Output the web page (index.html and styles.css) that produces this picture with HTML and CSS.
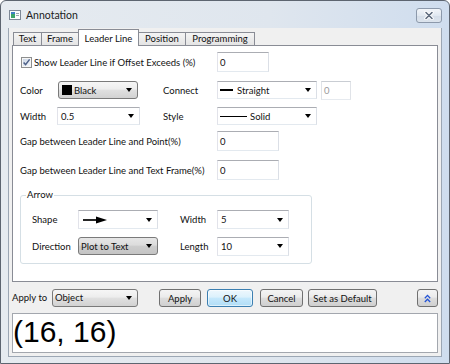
FILE: index.html
```html
<!DOCTYPE html>
<html>
<head>
<meta charset="utf-8">
<title>Annotation</title>
<link rel="stylesheet" href="styles.css">
</head>
<body>
<div class="window">
  <div class="titlebar">
    <svg class="app-icon" width="12" height="10" viewBox="0 0 12 10">
      <rect x="0.5" y="0.5" width="11" height="9" fill="#fbfcfd" stroke="#7d8896"/>
      <rect x="2" y="2" width="4" height="6" fill="#3aa46a"/>
      <rect x="2" y="2" width="4" height="2" fill="#3f7fc4"/>
      <rect x="7" y="3" width="3" height="1" fill="#9aa4b0"/>
      <rect x="7" y="5" width="3" height="1" fill="#9aa4b0"/>
    </svg>
    <span class="title">Annotation</span>
    <div class="close-btn">
      <svg width="10" height="9" viewBox="0 0 10 9">
        <path d="M2 1.5L8 7.5M8 1.5L2 7.5" stroke="#ffffff" stroke-width="3.4" stroke-linecap="round"/>
        <path d="M2 1.5L8 7.5M8 1.5L2 7.5" stroke="#5f6c7e" stroke-width="1.6" stroke-linecap="round"/>
      </svg>
    </div>
  </div>

  <div class="client">
    <div class="tabs">
      <div class="tab t-text">Text</div>
      <div class="tab t-frame">Frame</div>
      <div class="tab t-leader active">Leader Line</div>
      <div class="tab t-position">Position</div>
      <div class="tab t-prog">Programming</div>
    </div>

    <div class="panel">
      <div class="row r1">
        <div class="check">
          <svg class="checkbox" width="11" height="11" viewBox="0 0 11 11">
            <defs>
              <linearGradient id="cbg" x1="0" y1="0" x2="1" y2="1">
                <stop offset="0" stop-color="#cbd6e6"/>
                <stop offset="1" stop-color="#f4f7fb"/>
              </linearGradient>
            </defs>
            <rect x="0.5" y="0.5" width="10" height="10" fill="#f6f6f6" stroke="#8e8f8f"/>
            <rect x="2" y="2" width="7" height="7" fill="url(#cbg)"/>
            <path d="M2.6 5.4L4.6 7.6L8.6 2.4" fill="none" stroke="#4e6088" stroke-width="1.5"/>
          </svg>
          <span>Show Leader Line if Offset Exceeds (%)</span>
        </div>
        <div class="textbox w52">0</div>
      </div>

      <div class="row r2">
        <span class="lbl w38">Color</span>
        <div class="combo btnlike c-color">
          <span class="val"><span class="swatch"></span>Black</span>
        </div>
        <span class="lbl lbl-b">Connect</span>
        <div class="combo c-wide">
          <span class="val"><span class="dash"></span>Straight</span>
        </div>
        <div class="textbox disabled small">0</div>
      </div>

      <div class="row r3">
        <span class="lbl w37">Width</span>
        <div class="combo c-width"><span class="val">0.5</span></div>
        <span class="lbl lbl-b2">Style</span>
        <div class="combo c-wide"><span class="val"><span class="solid"></span>Solid</span></div>
      </div>

      <div class="row r4">
        <span class="lbl w197">Gap between Leader Line and Point(%)</span>
        <div class="textbox w62">0</div>
      </div>

      <div class="row r5">
        <span class="lbl w197">Gap between Leader Line and Text Frame(%)</span>
        <div class="textbox w62">0</div>
      </div>

      <fieldset class="group">
        <legend>Arrow</legend>
        <div class="row g1">
          <span class="lbl w46">Shape</span>
          <div class="combo c-shape">
            <span class="val">
              <svg width="24" height="8" viewBox="0 0 24 8">
                <path d="M0 4H14" stroke="#000" stroke-width="1.7"/>
                <path d="M13 0.5L24 4L13 7.5Z" fill="#000"/>
              </svg>
            </span>
          </div>
          <span class="lbl lbl-c">Width</span>
          <div class="combo c-small"><span class="val">5</span></div>
        </div>
        <div class="row g2">
          <span class="lbl w46">Direction</span>
          <div class="combo btnlike dark c-shape"><span class="val">Plot to Text</span></div>
          <span class="lbl lbl-c">Length</span>
          <div class="combo c-small"><span class="val">10</span></div>
        </div>
      </fieldset>
    </div>

    <div class="bottom">
      <span class="lbl w40">Apply to</span>
      <div class="combo btnlike c-object"><span class="val">Object</span></div>
      <div class="btn b-apply">Apply</div>
      <div class="btn ok b-ok">OK</div>
      <div class="btn b-cancel">Cancel</div>
      <div class="btn b-default">Set as Default</div>
      <div class="btn b-up">
        <svg width="7" height="9" viewBox="0 0 7 9">
          <path d="M0.8 4.2L3.5 1.4L6.2 4.2M0.8 8L3.5 5.2L6.2 8" fill="none" stroke="#2253d6" stroke-width="1.3"/>
        </svg>
      </div>
    </div>

    <div class="output">(16, 16)</div>
  </div>
</div>
</body>
</html>
```

FILE: styles.css
```css
* { box-sizing: border-box; }
html, body { margin: 0; padding: 0; }
body {
  width: 450px;
  height: 364px;
  overflow: hidden;
  font-family: Lato, "Liberation Sans", sans-serif;
  font-size: 9.5px;
  color: #111;
}

.window {
  width: 450px;
  height: 364px;
  border: 1px solid #5d6570;
  border-radius: 6px 6px 0 0;
  background: linear-gradient(to right, #e6ebf0, #dfe6ee 60%, #cfddee);
  display: flex;
  flex-direction: column;
}

.titlebar {
  height: 27px;
  flex: none;
  display: flex;
  align-items: center;
  padding-left: 8px;
}
.app-icon { display: block; margin-right: 5px; }
.title { font-size: 10.5px; color: #1c1c1c; }
.close-btn {
  margin-left: auto;
  margin-right: 7px;
  align-self: flex-start;
  margin-top: 7px;
  width: 26px;
  height: 15px;
  border: 1px solid #8c99ab;
  border-radius: 3px;
  background: linear-gradient(#f2f5f9, #e1e8f0 50%, #d4dde8 51%, #dce4ed);
  display: flex;
  align-items: center;
  justify-content: center;
}
.close-btn svg { display: block; }

.client {
  flex: none;
  height: 329px;
  margin: 0 7px;
  background: #f0f0f0;
  border: 1px solid #9ca7b4;
  border-top: none;
  padding: 1px 3px 3px;
  display: flex;
  flex-direction: column;
}

.tabs {
  display: flex;
  align-items: flex-end;
  height: 16px;
  padding-left: 1px;
  flex: none;
}
.tab {
  height: 13px;
  border: 1px solid #898c95;
  border-bottom: none;
  margin-right: -1px;
  background: linear-gradient(#f4f4f4, #e4e4e4);
  display: flex;
  align-items: center;
  justify-content: center;
  line-height: 1;
}
.tab.active {
  height: 17px;
  margin-bottom: -1px;
  padding-top: 1px;
  background: #fff;
  position: relative;
  z-index: 1;
}
.t-text { width: 29px; }
.t-frame { width: 38px; }
.t-leader { width: 61px; }
.t-position { width: 48px; }
.t-prog { width: 70px; }

.panel {
  height: 237px;
  flex: none;
  background: #fff;
  border: 1px solid #898c95;
  padding: 6px 0 0 7px;
}

.row { display: flex; align-items: center; }
.r1 { height: 20px; }
.r2 { height: 18px; margin-top: 9px; }
.r3 { height: 18px; margin-top: 8px; }
.r4 { height: 20px; margin-top: 6px; }
.r5 { height: 20px; margin-top: 9px; }

.check { display: flex; align-items: center; width: 197px; }
.checkbox { display: block; margin-left: 1px; margin-right: 2px; }

.lbl { flex: none; white-space: nowrap; }
.w37 { width: 37px; }
.w38 { width: 38px; }
.w40 { width: 40px; }
.w46 { width: 46px; }
.w197 { width: 197px; }
.lbl-b { width: 54px; margin-left: 25px; }
.lbl-b2 { width: 54px; margin-left: 23px; }
.lbl-c { width: 37px; margin-left: 22px; }

.textbox {
  height: 20px;
  flex: none;
  background: #fff;
  border: 1px solid;
  border-color: #abadb3 #dbdfe6 #e3e9ef #e2e3ea;
  padding-left: 2px;
  display: flex;
  align-items: center;
}
.w52 { width: 52px; }
.w62 { width: 62px; }
.textbox.small { width: 30px; height: 19px; margin-left: 4px; }
.textbox.disabled { color: #9a9a9a; border-color: #c9cdd3 #e0e3e8 #e6eaef #e0e3e8; }

.combo {
  flex: none;
  height: 18px;
  display: flex;
  align-items: center;
  background: #fff;
  border: 1px solid;
  border-color: #abadb3 #dbdfe6 #e3e9ef #e2e3ea;
  padding: 0 5px 0 2px;
}
.combo::after {
  content: "";
  flex: none;
  width: 0;
  height: 0;
  border-left: 3px solid transparent;
  border-right: 3px solid transparent;
  border-top: 4px solid #000;
}
.combo .val { flex: 1; display: flex; align-items: center; white-space: nowrap; }
.combo .val svg { display: block; }
.combo.btnlike {
  border: 1px solid #7a7a7a;
  border-radius: 3px;
  background: linear-gradient(#f6f6f6, #ededed 45%, #e0e0e0 50%, #d2d2d2);
}
.combo.btnlike.dark {
  background: linear-gradient(#e6e6e6, #dcdcdc 45%, #cdcdcd 50%, #c4c4c4);
}
.c-color { width: 80px; padding-left: 3px; }
.c-width { width: 83px; padding-left: 3px; }
.c-wide { width: 100px; padding-left: 2px; }
.c-shape { width: 80px; padding-left: 4px; }
.c-small { width: 72px; height: 19px; padding-left: 3px; }
.c-object { width: 86px; }
.c-shape.btnlike { padding-left: 2px; }

.swatch { width: 10px; height: 10px; background: #000; margin-right: 2px; }
.dash { width: 13px; height: 2px; background: #000; margin-right: 4px; }
.solid { width: 27px; height: 1px; background: #000; margin-right: 3px; }

.group {
  width: 292px;
  margin: 8px 0 0 0;
  padding: 0 0 8px 11px;
  border: 1px solid #d5dfe5;
  border-radius: 3px;
  min-width: 0;
}
.group legend {
  padding: 0 1px;
  margin-left: -6px;
  line-height: 14px;
  height: 14px;
}
.g1 { height: 19px; margin-top: 8px; }
.g2 { height: 18px; margin-top: 8px; }
.g1 .c-shape { height: 19px; }

.bottom {
  flex: none;
  display: flex;
  align-items: center;
  height: 19px;
  margin-top: 6px;
}
.btn {
  flex: none;
  height: 18px;
  border: 1px solid #707070;
  border-radius: 3px;
  background: linear-gradient(#f4f4f4, #ebebeb 45%, #dddddd 50%, #cfcfcf);
  display: flex;
  align-items: center;
  justify-content: center;
  margin-top: 1px;
}
.btn.ok {
  border-color: #3c7fb1;
  background: linear-gradient(#edf7fd, #dcf1fc 45%, #c5e8fc 50%, #b0ddf6);
  box-shadow: inset 0 0 0 1px rgba(255, 255, 255, 0.55);
}
.b-apply { width: 42px; margin-left: 21px; }
.b-ok { width: 46px; margin-left: 6px; }
.b-cancel { width: 43px; margin-left: 7px; }
.b-default { width: 69px; margin-left: 5px; }
.b-up { width: 21px; margin-left: auto; }
.b-up svg { display: block; }

.output {
  flex: none;
  height: 40px;
  margin-top: 6px;
  background: #fff;
  border: 1px solid #a3a7ae;
  font-family: "Liberation Sans", Arial, sans-serif;
  font-size: 30px;
  line-height: 34px;
  padding: 1px 0 0 0;
  color: #000;
}
```
